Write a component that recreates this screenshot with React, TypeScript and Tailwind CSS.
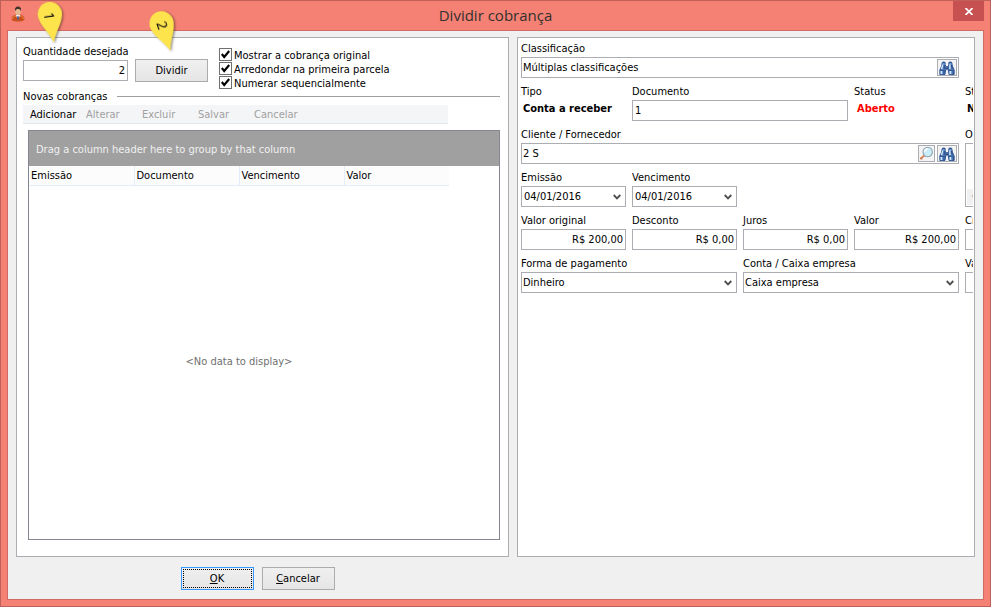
import { useState } from 'react'
import type { ReactNode } from 'react'
import clsx from 'clsx'

const COLUMNS = ['Emissão', 'Documento', 'Vencimento', 'Valor']

const ACTIONS = [
  { label: 'Adicionar', enabled: true },
  { label: 'Alterar', enabled: false },
  { label: 'Excluir', enabled: false },
  { label: 'Salvar', enabled: false },
  { label: 'Cancelar', enabled: false },
]

const BOX = 'h-[21px] w-full border border-[#abadb3] bg-white'

/* Icons */

function UserIcon() {
  return (
    <svg width="16" height="16" viewBox="0 0 16 16" aria-hidden="true">
      <path d="M1.500 13c0-2.500 2-3.800 4.500-4.500h4c2.500.7 4.500 2 4.500 4.500 0 1.700-3 2.500-6.500 2.500S1.500 14.700 1.500 13z" fill="#c8501c" />
      <path d="M2.500 13c.5-2 1.500-2.700 3.500-3.200M13.500 13c-.5-2-1.500-2.700-3.500-3.200" fill="none" stroke="#ee8a4c" />
      <path d="M5.800 9L8 14l2.200-5z" fill="#f4f6fa" />
      <path d="M7.500 10h1l.5 2.500L8 14l-1-1.500z" fill="#35508a" />
      <ellipse cx="8" cy="5.500" rx="2.700" ry="3.800" fill="#e5b88f" />
      <path d="M5.100 5.200C4.500 2 5.800.5 8 .5s3.600 1.500 2.900 4.700C10.500 3.800 9.800 3 8.300 3 6.800 3 5.500 3.500 5.100 5.200z" fill="#40302a" />
    </svg>
  )
}

function BinocularsIcon() {
  return (
    <svg width="16" height="14" viewBox="0 0 16 14" aria-hidden="true">
      {/* Bridge between the two barrels */}
      <path d="M6 5h4v3.500H6z" fill="#2a4680" />
      <path d="M7.200 6h1.600" stroke="#9fbbe0" />
      {/* Left barrel */}
      <path d="M3.200 1.500h3v2.300l.6 1.700v3L6 13.500H.8V9L2.600 5z" fill="#6f9bd4" stroke="#2c5190" strokeWidth=".9" />
      <path d="M3.700.6h2v1.400h-2z" fill="#2c5190" />
      <path d="M3.800 3.600L2.400 8M2.300 10v3" stroke="#e3effb" strokeWidth="1.200" />
      <path d="M1 9.200h5.500" stroke="#1c3a74" />
      <path d="M5.200 4v4M5 10v3.300" stroke="#264a8a" strokeWidth="1.300" />
      {/* Right barrel */}
      <path d="M12.800 1.500h-3v2.300l-.6 1.700v3l.8 5h5.200V9l-1.800-4z" fill="#6f9bd4" stroke="#2c5190" strokeWidth=".9" />
      <path d="M10.300.6h2v1.400h-2z" fill="#2c5190" />
      <path d="M10.900 3.600V8M11.300 10v3" stroke="#e3effb" strokeWidth="1.200" />
      <path d="M9.500 9.200H15" stroke="#1c3a74" />
      <path d="M12.300 4l1 4M14.200 10v3.300" stroke="#264a8a" strokeWidth="1.300" />
    </svg>
  )
}

function MagnifierIcon() {
  return (
    <svg width="15" height="15" viewBox="0 0 15 15" aria-hidden="true">
      <path d="M2 12.500l3-2.700" stroke="#d9875b" strokeWidth="2" strokeLinecap="round" />
      <path d="M1.200 11.500L3 13.500" stroke="#a9643e" strokeWidth=".8" />
      <circle cx="8.700" cy="6" r="4.700" fill="#c9eef9" stroke="#8fa3b0" strokeWidth="1.100" />
      <path d="M5.700 6a3 3 0 0 1 3-3" fill="none" stroke="#fff" strokeWidth="1.300" />
    </svg>
  )
}

function ChevronIcon() {
  return (
    <svg width="8" height="6" viewBox="0 0 8 6" aria-hidden="true">
      <path d="M.7 1L4 4.300 7.300 1" fill="none" stroke="#505050" strokeWidth="1.900" />
    </svg>
  )
}

function CheckIcon() {
  return (
    <svg width="9" height="9" viewBox="0 0 9 9" aria-hidden="true">
      <path d="M.8 4L3.200 7 8.200 1" fill="none" stroke="#000" strokeWidth="2.100" />
    </svg>
  )
}

/* Yellow drop used to number the steps of the form */
function StepPin({ step, className }: { step: number; className: string }) {
  return (
    <svg
      width="32"
      height="46"
      viewBox="0 0 32 46"
      className={clsx('pointer-events-none absolute z-10 drop-shadow-[1px_1px_1px_rgba(0,0,0,0.45)]', className)}
      aria-hidden="true"
    >
      <path d="M16 44C13.500 34.500 3.800 24 3.800 15a12.200 12.200 0 0 1 24.400 0C28.200 24 18.500 34.500 16 44z" fill="#fde44c" />
      <text
        x="16"
        y="17"
        transform="rotate(90 16 17)"
        textAnchor="middle"
        dominantBaseline="central"
        fontSize="14"
        fill="#111"
        className="font-['Noto_Sans',sans-serif]"
      >
        {step}
      </text>
    </svg>
  )
}

/* Form pieces */

function Field({ label, id, className, children }: { label: string; id?: string; className?: string; children: ReactNode }) {
  return (
    <div className={clsx('flex flex-col gap-px', className)}>
      {id ? (
        <label htmlFor={id} className="whitespace-nowrap">{label}</label>
      ) : (
        <span className="whitespace-nowrap">{label}</span>
      )}
      {children}
    </div>
  )
}

function TextBox({ id, value = '', right }: { id: string; value?: string; right?: boolean }) {
  return <input id={id} defaultValue={value} className={clsx(BOX, 'px-0.5 outline-none', right && 'text-right')} />
}

function DateBox({ id, value }: { id: string; value: string }) {
  return (
    <div className={clsx(BOX, 'flex items-center')}>
      <input id={id} defaultValue={value} className="w-full min-w-0 flex-1 px-0.5 outline-none" />
      <button type="button" aria-label="Abrir calendário" className="flex h-full w-4 items-center justify-center">
        <ChevronIcon />
      </button>
    </div>
  )
}

function SelectBox({ id, value }: { id: string; value: string }) {
  return (
    <div className={clsx(BOX, 'relative')}>
      <select id={id} defaultValue={value} className="block h-full w-full appearance-none px-px outline-none">
        <option>{value}</option>
      </select>
      <span className="pointer-events-none absolute inset-y-0 right-0 flex w-4 items-center justify-center">
        <ChevronIcon />
      </span>
    </div>
  )
}

function IconButton({ label, className, children }: { label: string; className: string; children: ReactNode }) {
  return (
    <button
      type="button"
      aria-label={label}
      className={clsx(
        'flex h-[17px] shrink-0 items-center justify-center border border-[#abadb3] bg-[#f4f4f4]',
        className,
      )}
    >
      {children}
    </button>
  )
}

function LookupBox({ id, value, children }: { id: string; value: string; children: ReactNode }) {
  return (
    <div className={clsx(BOX, 'flex items-center gap-0.5 pr-px')}>
      <input id={id} defaultValue={value} className="min-w-0 flex-1 px-px outline-none" />
      {children}
    </div>
  )
}

function CheckRow({ label }: { label: string }) {
  const [checked, setChecked] = useState(true)

  return (
    <label className="flex h-[14px] items-start gap-0.5">
      <span className="grid place-items-center">
        <input
          type="checkbox"
          checked={checked}
          onChange={(e) => setChecked(e.target.checked)}
          className="col-start-1 row-start-1 size-[13px] appearance-none border border-[#707070] bg-white"
        />
        <span className={clsx('pointer-events-none col-start-1 row-start-1', !checked && 'hidden')}>
          <CheckIcon />
        </span>
      </span>
      <span className="pt-px whitespace-nowrap">{label}</span>
    </label>
  )
}

function PushButton({ focused, children }: { focused?: boolean; children: ReactNode }) {
  return (
    <button
      type="button"
      className={clsx(
        'h-[23px] w-[73px] border bg-linear-to-b from-[#f0f0f0] to-[#e5e5e5] p-px',
        focused ? 'border-[#3399ff]' : 'border-[#acacac]',
      )}
    >
      <span className={clsx('flex h-full items-center justify-center', focused && 'border border-dotted border-black')}>
        <span>{children}</span>
      </span>
    </button>
  )
}

function SplitPanel() {
  return (
    <section className="flex min-w-0 flex-col border border-[#abadb3] bg-white px-1.5 pt-[7px] pb-4">
      <div className="flex gap-[7px] pr-2">
        <Field label="Quantidade desejada" id="quantidade" className="w-[105px]">
          <TextBox id="quantidade" value="2" right />
        </Field>
        <div className="pt-[14px]">
          <PushButton>Dividir</PushButton>
        </div>
        <div className="flex flex-col pt-[3px] pl-1">
          <CheckRow label="Mostrar a cobrança original" />
          <CheckRow label="Arredondar na primeira parcela" />
          <CheckRow label="Numerar sequencialmente" />
        </div>
      </div>

      <div className="flex items-start gap-[9px] pr-0.5">
        <h2>Novas cobranças</h2>
        <div className="mt-1.5 h-px flex-1 bg-[#a0a0a0]" />
      </div>

      <div className="mt-px flex h-[19px] w-[425px] items-center border-b border-[#e4e6e8] bg-[#f4f5f7] pt-px pl-[7px]">
        {ACTIONS.map((action) => (
          <button
            key={action.label}
            type="button"
            disabled={!action.enabled}
            className="w-14 text-left whitespace-nowrap disabled:text-[#a0a0a0]"
          >
            {action.label}
          </button>
        ))}
      </div>

      {/* Data grid */}
      <div className="mt-1.5 mr-0.5 ml-[5px] flex flex-1 flex-col border border-[#828790]">
        <div className="flex h-[35px] items-center bg-[#a0a0a0] px-[7px] pt-0.5 text-[#f0f0f0]">
          Drag a column header here to group by that column
        </div>
        <div className="flex flex-1">
          <table className="w-[420px] table-fixed">
            <thead>
              <tr className="h-[19px]">
                {COLUMNS.map((column) => (
                  <th
                    key={column}
                    className="border-r border-b border-[#e3edf9] bg-[#fcfcfc] px-0.5 pt-0.5 text-left font-normal last:border-r-0"
                  >
                    {column}
                  </th>
                ))}
              </tr>
            </thead>
            <tbody>
              <tr>
                <td colSpan={4} className="text-center text-[#707070]">{'<No data to display>'}</td>
              </tr>
            </tbody>
          </table>
        </div>
      </div>
    </section>
  )
}

function ChargePanel() {
  return (
    <section className="min-w-0 border border-[#abadb3] bg-white pr-px">
      <div className="overflow-hidden pt-1 pl-[3px]">
        <div className="grid grid-cols-[repeat(5,105px)] gap-x-1.5 gap-y-[7px]">
          <Field label="Classificação" id="classificacao" className="col-span-4">
            <LookupBox id="classificacao" value="Múltiplas classificações">
              <IconButton label="Pesquisar classificação" className="w-5"><BinocularsIcon /></IconButton>
            </LookupBox>
          </Field>

          <Field label="Tipo" className="col-start-1">
            <strong className="px-0.5 pt-0.5 whitespace-nowrap">Conta a receber</strong>
          </Field>
          <Field label="Documento" id="documento" className="col-span-2">
            <TextBox id="documento" value="1" />
          </Field>
          <Field label="Status">
            <strong className="px-[3px] pt-0.5 text-[#ff0000]">Aberto</strong>
          </Field>
          <Field label="Status">
            <strong className="px-0.5 pt-0.5">Normal</strong>
          </Field>

          <Field label="Cliente / Fornecedor" id="cliente" className="col-span-4">
            <LookupBox id="cliente" value="2 S">
              <IconButton label="Ver cliente" className="w-[17px]"><MagnifierIcon /></IconButton>
              <IconButton label="Pesquisar cliente" className="w-5"><BinocularsIcon /></IconButton>
            </LookupBox>
          </Field>
          <Field label="Observação" id="observacao" className="row-span-2">
            <div className="flex h-[64px] flex-col border border-[#abadb3] p-px">
              <textarea id="observacao" className="min-h-0 w-full flex-1 resize-none outline-none" />
              <div className="h-4 bg-[#f0f0f0] pl-1 text-[#a0a0a0]">‹</div>
            </div>
          </Field>

          <Field label="Emissão" id="emissao" className="col-start-1">
            <DateBox id="emissao" value="04/01/2016" />
          </Field>
          <Field label="Vencimento" id="vencimento">
            <DateBox id="vencimento" value="04/01/2016" />
          </Field>

          <Field label="Valor original" id="valor-original" className="col-start-1">
            <TextBox id="valor-original" value="R$ 200,00" right />
          </Field>
          <Field label="Desconto" id="desconto">
            <TextBox id="desconto" value="R$ 0,00" right />
          </Field>
          <Field label="Juros" id="juros">
            <TextBox id="juros" value="R$ 0,00" right />
          </Field>
          <Field label="Valor" id="valor">
            <TextBox id="valor" value="R$ 200,00" right />
          </Field>
          <Field label="Crédito" id="credito">
            <TextBox id="credito" />
          </Field>

          <Field label="Forma de pagamento" id="forma" className="col-span-2">
            <SelectBox id="forma" value="Dinheiro" />
          </Field>
          <Field label="Conta / Caixa empresa" id="conta" className="col-span-2">
            <SelectBox id="conta" value="Caixa empresa" />
          </Field>
          <Field label="Valor pago" id="valor-pago">
            <TextBox id="valor-pago" />
          </Field>
        </div>
      </div>
    </section>
  )
}

export default function App() {
  return (
    <div className="relative flex min-h-screen flex-col border border-[#c0605a] bg-[#f58174] px-1.5 pb-1.5 font-['DejaVu_Sans_Condensed','DejaVu_Sans',sans-serif] text-[11px] leading-[14px] text-black">
      {/* Title bar */}
      <header className="grid h-[29px] grid-cols-[1fr_auto_1fr]">
        <div className="pt-[5px] pl-[3px]">
          <UserIcon />
        </div>
        <h1 className="pt-1 font-['Open_Sans',sans-serif] text-[15px] leading-5 text-[#33302f]">Dividir cobrança</h1>
        <button
          type="button"
          aria-label="Fechar"
          className="flex h-5 w-[31px] items-center justify-center justify-self-end bg-[#c75050]"
        >
          <svg width="8" height="7" viewBox="0 0 8 7" aria-hidden="true">
            <path d="M.5 0L7.500 7M7.500 0L.5 7" stroke="#fff" strokeWidth="1.700" />
          </svg>
        </button>
      </header>

      <main className="flex flex-1 flex-col border border-[#d06a62] bg-[#f0f0f0] px-2 pt-1.5 pb-[9px]">
        <div className="grid flex-1 grid-cols-[minmax(0,493fr)_minmax(0,458fr)] gap-2">
          <SplitPanel />
          <ChargePanel />
        </div>
        <div className="grid grid-cols-[minmax(0,493fr)_minmax(0,458fr)] gap-2 pt-2.5">
          <div className="flex justify-center gap-2 pr-2.5">
            <PushButton focused><u>O</u>K</PushButton>
            <PushButton><u>C</u>ancelar</PushButton>
          </div>
        </div>
      </main>

      <StepPin step={1} className="-top-0.5 left-[34px] -rotate-8" />
      <StepPin step={2} className="top-[7px] left-[147px] -rotate-18" />
    </div>
  )
}
